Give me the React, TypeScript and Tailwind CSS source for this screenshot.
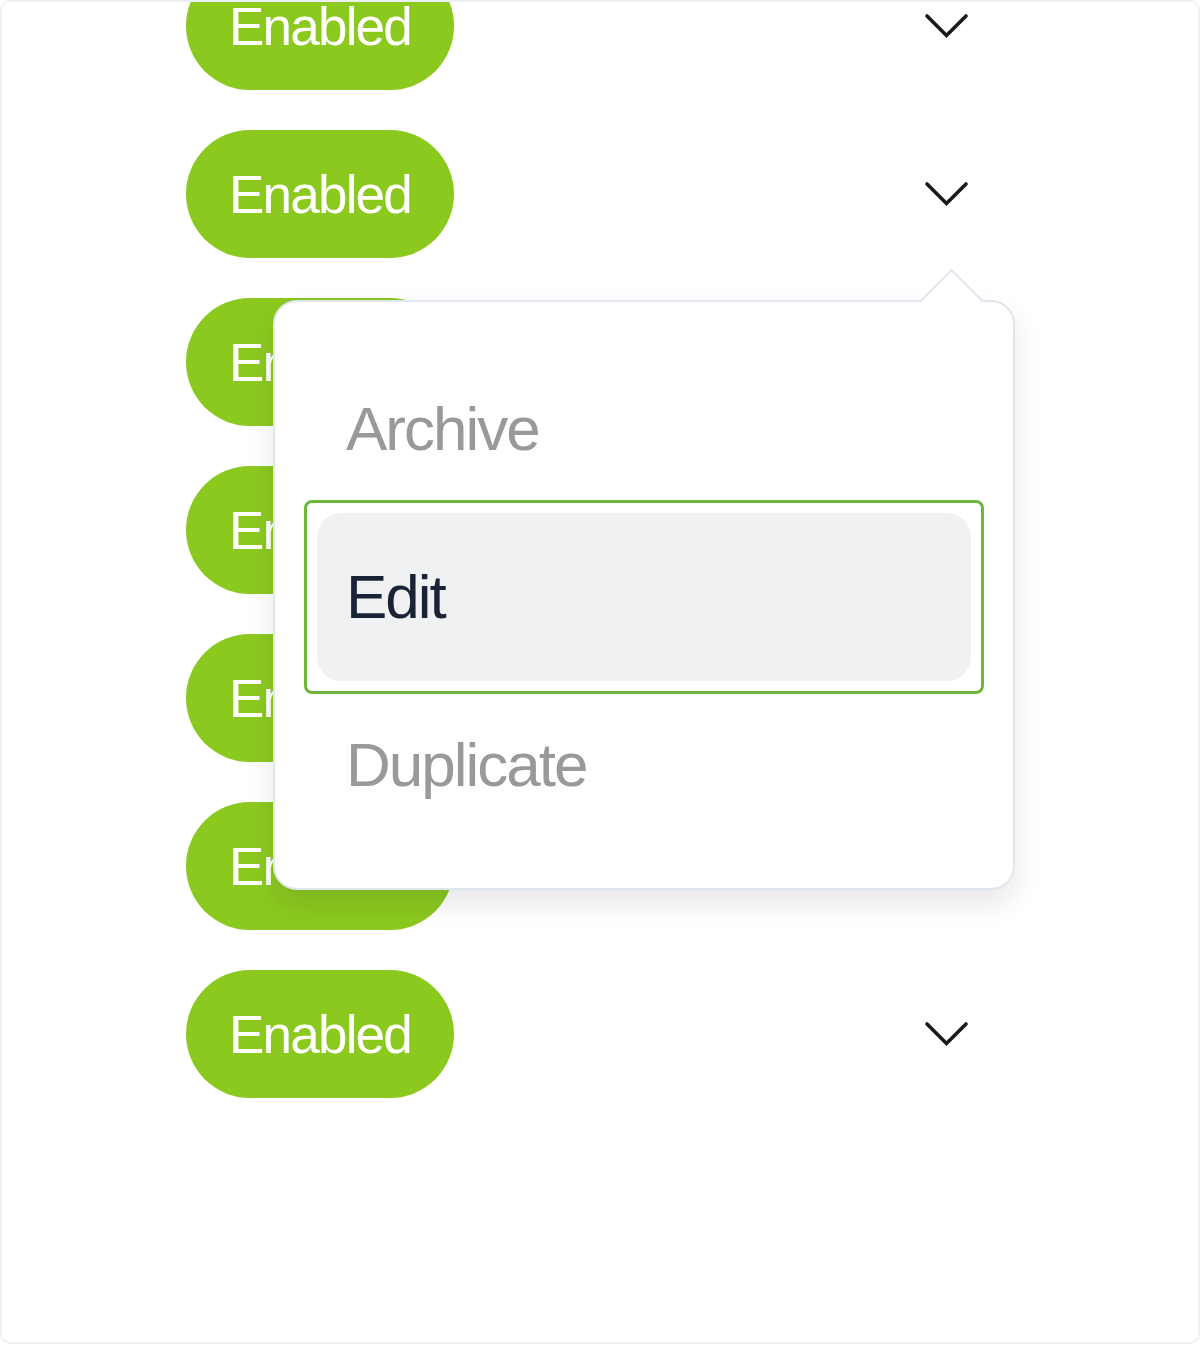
import React from "react";

const Chevron = () => (
  <svg width="48" height="28" viewBox="0 0 48 28" fill="none" className="shrink-0">
    <polyline points="4,4 23.5,23.5 43,4" stroke="#1a1a1c" strokeWidth="3.6" strokeLinecap="round" strokeLinejoin="miter" />
  </svg>
);

const Pill = () => (
  <div className="flex h-[128px] w-[268px] shrink-0 items-center justify-center rounded-full bg-[#8bc91f]">
    <span className="text-[53px] leading-none tracking-[-1.8px] text-white" style={{ fontFamily: '"Liberation Sans", Arial, sans-serif' }}>
      Enabled
    </span>
  </div>
);

export default function App() {
  const rows = [0, 1, 2, 3, 4, 5, 6];
  return (
    <div className="h-[1345px] w-[1200px] bg-white" style={{ fontFamily: '"Liberation Sans", Arial, sans-serif' }}>
      <div className="relative h-[1344px] w-[1200px] overflow-hidden rounded-[10px] border-2 border-[#eef0f5] bg-white">
        <div className="mt-[-40px] flex flex-col gap-[40px]">
          {rows.map((r) => (
            <div key={r} className="ml-[184px] flex h-[128px] items-center gap-[469px]">
              <Pill />
              <Chevron />
            </div>
          ))}
        </div>

        <div className="absolute left-[271px] top-[298px] h-[590px] w-[742px] rounded-[24px] border-2 border-[#dfe6ef] bg-white shadow-[0_14px_28px_rgba(15,23,42,0.10)]">
          <div className="absolute left-[654px] top-[-24.5px] h-[45px] w-[45px] rotate-45 border-l-2 border-t-2 border-[#dfe6ef] bg-white" />
          <div className="relative flex flex-col px-[42px] pb-[39px] pt-[43px]">
            <div className="flex h-[168px] items-center rounded-[24px] pl-[29px]">
              <span className="text-[62px] leading-none tracking-[-2px] text-[#999999]">Archive</span>
            </div>
            <div className="relative flex h-[168px] items-center rounded-[24px] bg-[#f0f1f3] pl-[29px]">
              <div className="absolute -inset-[13px] rounded-[8px] border-[3px] border-[#6cb73a]" />
              <span className="text-[62px] leading-none tracking-[-2px] text-[#1a2235]">Edit</span>
            </div>
            <div className="flex h-[168px] items-center rounded-[24px] pl-[29px]">
              <span className="text-[62px] leading-none tracking-[-2px] text-[#999999]">Duplicate</span>
            </div>
          </div>
        </div>
      </div>
    </div>
  );
}
